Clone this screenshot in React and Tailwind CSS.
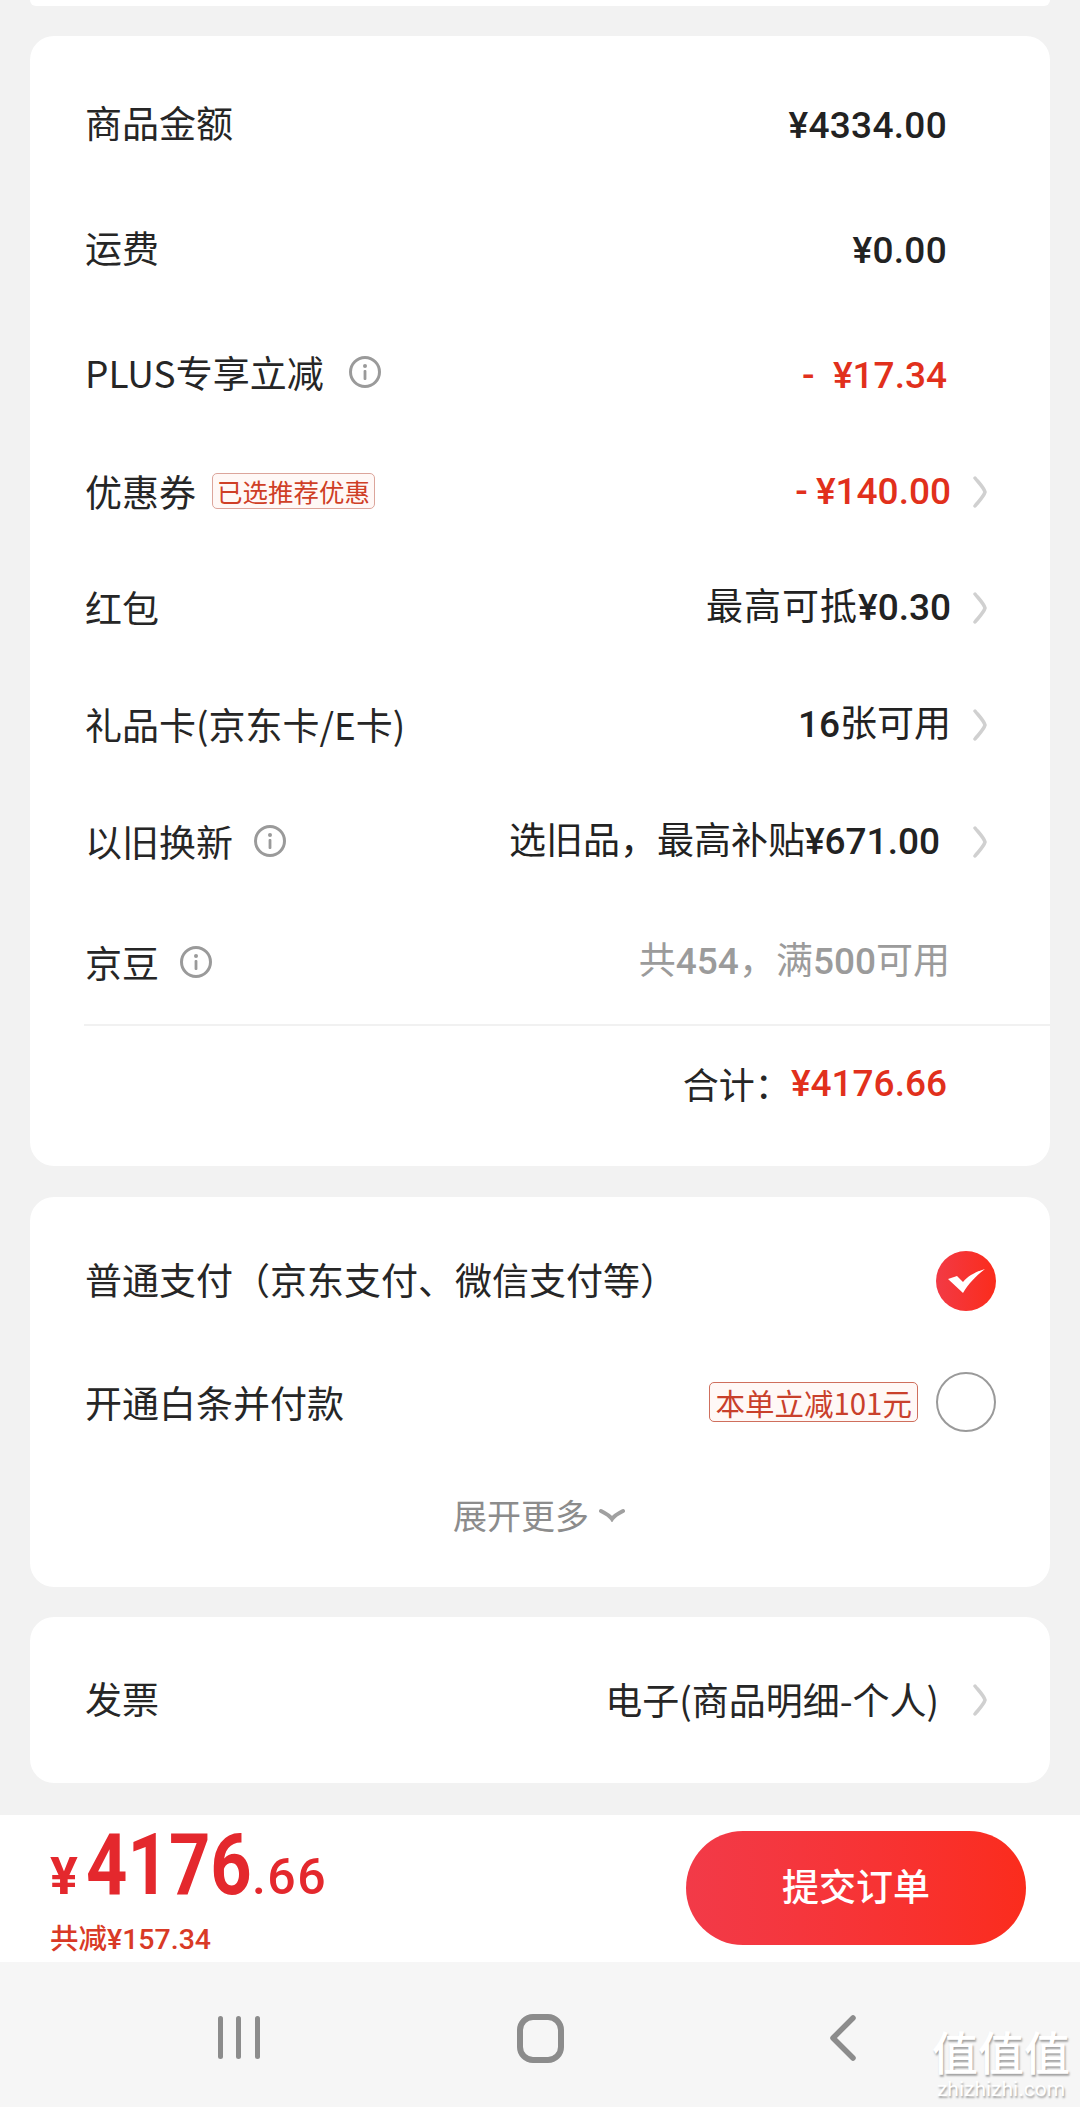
import React from 'react'

const cjk = "font-['Noto_Sans_CJK_SC',sans-serif]"
const num = "font-['Roboto','Noto_Sans_CJK_SC',sans-serif] font-medium"

function Info({ gap = 'ml-[20px]' }) {
  return (
    <svg width="34" height="34" viewBox="0 0 34 34" className={`${gap} shrink-0`}>
      <circle cx="17" cy="17" r="14.5" fill="none" stroke="#9a9a9a" strokeWidth="3" />
      <circle cx="17" cy="11" r="2" fill="#9a9a9a" />
      <rect x="15.6" y="15" width="2.8" height="10" rx="1" fill="#9a9a9a" />
    </svg>
  )
}

function Chevron() {
  return (
    <svg width="16" height="32" viewBox="0 0 16 32" className="shrink-0">
      <path d="M3 2 C8 8 12 12 13 16 C12 20 8 24 3 30" fill="none" stroke="#d0d0d0" strokeWidth="3.5" strokeLinecap="round" />
    </svg>
  )
}

function Row({ height, left, children, arrow, nudge = '', end = 'pr-[103px]' }) {
  return (
    <div className={`flex items-center justify-between pl-[55px] ${arrow ? 'pr-[62px]' : end} ${height}`}>
      <div className={`flex items-center text-[37px] leading-none text-[#262626] ${nudge}`}>{left}</div>
      <div className="flex items-center">
        {children}
        {arrow && <div className={`flex ${arrow}`}><Chevron /></div>}
      </div>
    </div>
  )
}

export default function App() {
  return (
    <div className={`h-[2107px] w-[1080px] overflow-hidden bg-[#f2f2f2] relative ${cjk}`}>
      <div className="mx-[30px] h-[6px] rounded-b-[24px] bg-white" />

      {/* 金额 */}
      <div className="mx-[30px] mt-[30px] rounded-[24px] bg-white pt-[31px] pb-[24px]">
        <Row height="h-[118px]" nudge="pb-[7px]" left="商品金额">
          <span className={`${num} text-[37px] tracking-[0.3px] text-[#222]`}>¥4334.00</span>
        </Row>
        <Row height="h-[132px]" nudge="pb-[7px]" left="运费">
          <span className={`${num} text-[37px] tracking-[0.3px] text-[#222]`}>¥0.00</span>
        </Row>
        <Row height="h-[117px]" nudge="pb-[7px]" left={<><span>PLUS专享立减</span><Info gap="ml-[24px]" /></>}>
          <span className={`${num} text-[37px] text-[#e1301c]`}>-&nbsp;&nbsp;¥17.34</span>
        </Row>
        <Row
          height="h-[116px]"
          arrow="ml-[21px]"
          nudge="pb-[2px]"
          left={
            <>
              <span>优惠券</span>
              <span className="ml-[16px] rounded-[5px] border border-[#dca59b] bg-[#fff8f6] px-[4px] text-[25.5px] leading-[34px] text-[#cf3f26]">
                已选推荐优惠
              </span>
            </>
          }
        >
          <span className={`${num} text-[37px] text-[#e1301c]`}>
            <span className="mr-[8px]">-</span>¥140.00
          </span>
        </Row>
        <Row height="h-[116px]" arrow="ml-[21px]" nudge="pb-[2px]" left="红包">
          <span className={`${num} text-[37px] text-[#222]`}>
            <span className="font-normal tracking-[1px]">最高可抵</span>¥0.30
          </span>
        </Row>
        <Row height="h-[118px]" arrow="ml-[21px]" nudge="pb-[2px]" left="礼品卡(京东卡/E卡)">
          <span className={`${num} text-[37px] text-[#222]`}>
            16<span className="font-normal">张可用</span>
          </span>
        </Row>
        <Row height="h-[116px]" arrow="ml-[32px]" nudge="pb-[2px]" left={<><span>以旧换新</span><Info /></>}>
          <span className={`${num} text-[37px] text-[#222]`}>
            <span className="font-normal">选旧品，最高补贴</span>¥671.00
          </span>
        </Row>
        <Row height="h-[124px]" end="pr-[100px]" left={<><span>京豆</span><Info /></>}>
          <span className={`${num} text-[37px] text-[#9b9b9b]`}>
            <span className="font-normal">共</span>454<span className="font-normal">，满</span>500
            <span className="font-normal">可用</span>
          </span>
        </Row>
        <div className="ml-[54px] h-[2px] bg-[#f1f1f1]" />
        <div className="flex h-[116px] items-center justify-end pr-[103px]">
          <span className="text-[36px] text-[#262626] pb-[3px]">合计：</span>
          <span className={`${num} text-[37px] text-[#e1301c]`}>¥4176.66</span>
        </div>
      </div>

      {/* 支付方式 */}
      <div className="mx-[30px] mt-[31px] rounded-[24px] bg-white pt-[24px] h-[390px]">
        <div className="flex h-[120px] items-center justify-between pl-[55px] pr-[54px]">
          <span className="text-[37px] leading-none text-[#262626] pb-[3px]">普通支付（京东支付、微信支付等）</span>
          <svg width="60" height="60" viewBox="0 0 60 60">
            <defs>
              <linearGradient id="pay" x1="0" x2="1" y1="0" y2="0">
                <stop offset="0" stopColor="#f23a45" />
                <stop offset="1" stopColor="#fb2c1c" />
              </linearGradient>
            </defs>
            <circle cx="30" cy="30" r="30" fill="url(#pay)" />
            <path d="M12 28 L21 25 L27 31 C32 25 39 21 49 18 C40 25 33 32 27 42 Z" fill="#fff" />
          </svg>
        </div>
        <div className="flex h-[122px] items-center justify-between pl-[55px] pr-[54px]">
          <span className="text-[37px] leading-none text-[#262626]">开通白条并付款</span>
          <div className="flex items-center">
            <span className="mr-[18px] rounded-[5px] border border-[#cf6f5d] bg-[#fff8f6] px-[5px] text-[29.5px] leading-[38px] text-[#c9402b]">
              本单立减101元
            </span>
            <div className="h-[60px] w-[60px] rounded-full border-[2.5px] border-[#9a9a9a]" />
          </div>
        </div>
        <div className="flex h-[104px] items-center justify-center pr-[2px]">
          <span className="text-[34px] leading-none text-[#8c8c8c]">展开更多</span>
          <svg width="26" height="14" viewBox="0 0 26 14" className="ml-[10px]">
            <path d="M2 3 C8 6 11 8 13 11 C15 8 18 6 24 3" fill="none" stroke="#a0a0a0" strokeWidth="4" strokeLinecap="round" />
          </svg>
        </div>
      </div>

      {/* 发票 */}
      <div className="mx-[30px] mt-[30px] flex h-[166px] items-center justify-between rounded-[24px] bg-white pl-[55px] pr-[62px]">
        <span className="text-[37px] leading-none text-[#262626] pb-[3px]">发票</span>
        <div className="flex items-center">
          <span className="text-[37px] leading-none text-[#262626] pb-[2px]">电子(商品明细-个人)</span>
          <div className="ml-[33px] flex"><Chevron /></div>
        </div>
      </div>

      {/* 底部结算栏 */}
      <div className="mt-[32px] flex h-[147px] items-center justify-between bg-white pl-[50px] pr-[54px]">
        <div className="flex flex-col">
          <div className="flex h-[80px] items-baseline text-[#e4282d] font-['Roboto',sans-serif] font-bold leading-none">
            <span className="text-[52px]">¥</span>
            <span className="ml-[8px] w-[166px] origin-left scale-x-[0.85] text-[85px]">4176</span>
            <span className="text-[50px] font-medium tracking-[1.5px]">.66</span>
          </div>
          <span className={`${num} mt-[23px] text-[28.5px] leading-none text-[#d93a26]`}>共减¥157.34</span>
        </div>
        <button className="mb-[2px] flex h-[114px] w-[340px] items-center justify-center rounded-full bg-gradient-to-r from-[#f23a48] to-[#fb2c1c] pb-[3px] text-[37px] font-medium text-white">
          提交订单
        </button>
      </div>

      {/* 系统导航栏 */}
      <div className="flex h-[146px] items-start bg-[#f6f6f6]">
        <svg width="1080" height="146" viewBox="0 0 1080 146" className="block">
          <g fill="#8c8c8c">
            <rect x="218" y="54" width="5" height="43" rx="2.5" />
            <rect x="236" y="54" width="5" height="43" rx="2.5" />
            <rect x="255" y="54" width="5" height="43" rx="2.5" />
          </g>
          <rect x="520" y="55" width="41" height="43" rx="13" fill="none" stroke="#8c8c8c" strokeWidth="6" />
          <path d="M853 56 L833 76 L853 96" fill="none" stroke="#8c8c8c" strokeWidth="5.5" strokeLinecap="round" strokeLinejoin="round" />
        </svg>
      </div>

      {/* 水印 */}
      <div className="absolute left-[932px] top-[2025px] flex w-[138px] flex-col items-center text-white [text-shadow:1px_2px_2px_rgba(0,0,0,0.35)]">
        <span className="text-[46px] font-medium leading-[50px]">值值值</span>
        <span className="font-['Roboto',sans-serif] text-[21px] leading-[28px]">zhizhizhi.com</span>
      </div>
    </div>
  )
}
